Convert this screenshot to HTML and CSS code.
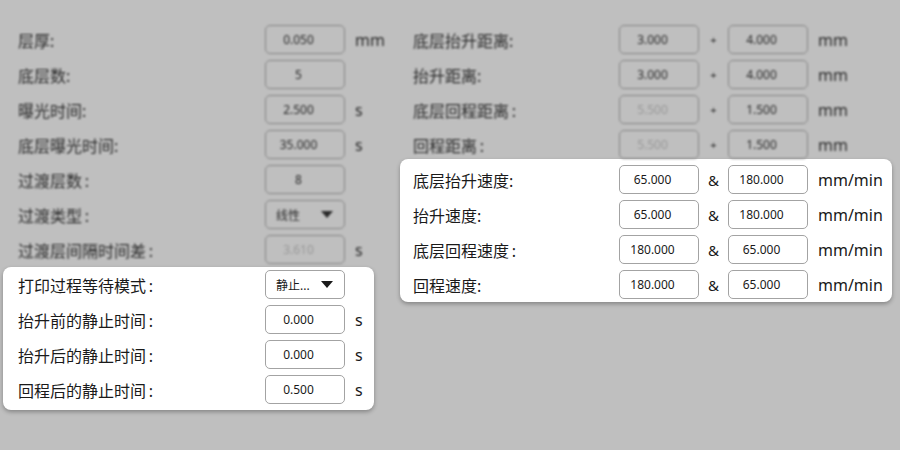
FILE: index.html
```html
<!DOCTYPE html>
<html lang="zh-CN">
<head>
    <meta charset="UTF-8">
    <title>打印参数</title>
    <link rel="stylesheet" href="styles.css">
</head>
<body>
    <div class="page">
        <div class="col col-left">
            <div class="row dim">
                <span class="label">层厚:</span>
                <span class="field">0.050</span>
                <span class="unit">mm</span>
            </div>
            <div class="row dim">
                <span class="label">底层数:</span>
                <span class="field">5</span>
            </div>
            <div class="row dim">
                <span class="label">曝光时间:</span>
                <span class="field">2.500</span>
                <span class="unit">s</span>
            </div>
            <div class="row dim">
                <span class="label">底层曝光时间:</span>
                <span class="field">35.000</span>
                <span class="unit">s</span>
            </div>
            <div class="row dim">
                <span class="label">过渡层数&#8201;:</span>
                <span class="field">8</span>
            </div>
            <div class="row dim">
                <span class="label">过渡类型&#8201;:</span>
                <span class="field select">线性 <i class="caret"></i></span>
            </div>
            <div class="row dim">
                <span class="label">过渡层间隔时间差&#8201;:</span>
                <span class="field disabled">3.610</span>
                <span class="unit">s</span>
            </div>

            <div class="spot spot-left">
                <div class="row">
                    <span class="label">打印过程等待模式&#8201;:</span>
                    <span class="field select">静止... <i class="caret"></i></span>
                </div>
                <div class="row">
                    <span class="label">抬升前的静止时间&#8201;:</span>
                    <span class="field">0.000</span>
                    <span class="unit">s</span>
                </div>
                <div class="row">
                    <span class="label">抬升后的静止时间&#8201;:</span>
                    <span class="field">0.000</span>
                    <span class="unit">s</span>
                </div>
                <div class="row">
                    <span class="label">回程后的静止时间&#8201;:</span>
                    <span class="field">0.500</span>
                    <span class="unit">s</span>
                </div>
            </div>
        </div>

        <div class="col col-right">
            <div class="row dim">
                <span class="label">底层抬升距离:</span>
                <span class="field">3.000</span>
                <span class="sep small">+</span>
                <span class="field">4.000</span>
                <span class="unit">mm</span>
            </div>
            <div class="row dim">
                <span class="label">抬升距离:</span>
                <span class="field">3.000</span>
                <span class="sep small">+</span>
                <span class="field">4.000</span>
                <span class="unit">mm</span>
            </div>
            <div class="row dim">
                <span class="label">底层回程距离&#8201;:</span>
                <span class="field disabled">5.500</span>
                <span class="sep small">+</span>
                <span class="field">1.500</span>
                <span class="unit">mm</span>
            </div>
            <div class="row dim">
                <span class="label">回程距离&#8201;:</span>
                <span class="field disabled">5.500</span>
                <span class="sep small">+</span>
                <span class="field">1.500</span>
                <span class="unit">mm</span>
            </div>

            <div class="spot spot-right">
                <div class="row">
                    <span class="label">底层抬升速度:</span>
                    <span class="field">65.000</span>
                    <span class="sep">&amp;</span>
                    <span class="field">180.000</span>
                    <span class="unit">mm/min</span>
                </div>
                <div class="row">
                    <span class="label">抬升速度:</span>
                    <span class="field">65.000</span>
                    <span class="sep">&amp;</span>
                    <span class="field">180.000</span>
                    <span class="unit">mm/min</span>
                </div>
                <div class="row">
                    <span class="label">底层回程速度&#8201;:</span>
                    <span class="field">180.000</span>
                    <span class="sep">&amp;</span>
                    <span class="field">65.000</span>
                    <span class="unit">mm/min</span>
                </div>
                <div class="row">
                    <span class="label">回程速度:</span>
                    <span class="field">180.000</span>
                    <span class="sep">&amp;</span>
                    <span class="field">65.000</span>
                    <span class="unit">mm/min</span>
                </div>
            </div>
        </div>
    </div>
</body>
</html>
```

FILE: styles.css
```css
body {
    margin: 0;
    background-color: #bfbfbf;
    font-family: "Noto Sans", "Noto Sans CJK SC", sans-serif;
    color: #1a1a1a;
}

.page {
    display: flex;
    width: 900px;
    height: 450px;
    padding-top: 22px;
    box-sizing: border-box;
}

.col {
    display: flex;
    flex-direction: column;
}

.col-left {
    width: 390px;
    padding-left: 18px;
    box-sizing: border-box;
}

.col-right {
    flex: 1;
    padding-left: 23px;
}

.row {
    display: flex;
    align-items: center;
    height: 35px;
    font-size: 16px;
}

.label {
    flex: 0 0 247px;
    white-space: nowrap;
}

.col-right .label {
    flex-basis: 206px;
}

.field {
    display: flex;
    align-items: center;
    justify-content: center;
    width: 80px;
    height: 29px;
    box-sizing: border-box;
    padding-right: 13px;
    border: 1px solid #a3a3a3;
    border-radius: 5px;
    background-color: #ffffff;
    font-size: 12px;
}

.field.select {
    justify-content: space-between;
    padding: 0 11px 0 10px;
}

.caret {
    width: 0;
    height: 0;
    border-left: 6px solid transparent;
    border-right: 6px solid transparent;
    border-top: 7px solid #1a1a1a;
}

.sep {
    width: 29px;
    text-align: center;
    font-size: 15px;
}

.sep.small {
    font-size: 11px;
}

.unit {
    margin-left: 10px;
    font-size: 16px;
}

/* greyed out rows behind the highlight */
.dim {
    filter: blur(1.1px);
    color: #2a2a2a;
}

.dim .field {
    background-color: transparent;
    border-color: #858585;
}

.dim .field.disabled {
    color: #999999;
}

.dim .caret {
    border-top-color: #2a2a2a;
}

.spot {
    background-color: #ffffff;
    border-radius: 8px;
    box-shadow: 0 2px 4px rgba(0, 0, 0, 0.3);
}

.spot-left {
    margin: 0 16px 0 -15px;
    padding: 0 0 3px 15px;
}

.spot-right {
    margin: -3px 8px 0 -13px;
    padding: 3px 0 0 13px;
}
```
